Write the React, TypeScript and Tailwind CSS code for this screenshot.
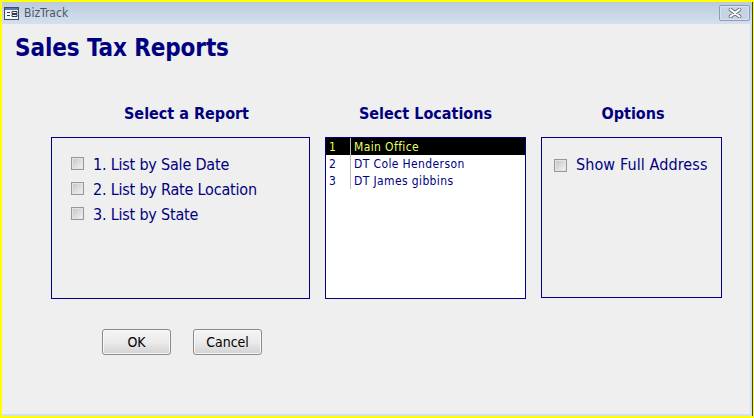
const font = { fontFamily: '"DejaVu Sans Condensed", "DejaVu Sans", sans-serif' };

function Check({ shift }: { shift: string }) {
  return (
    <span className={`box-border block h-[13px] w-[13px] shrink-0 border border-[#979797] bg-gradient-to-br from-[#c4c4c4] to-[#f4f4f4] shadow-[inset_0_0_0_1px_#e4e4e4] ${shift}`} />
  );
}

function CheckRow({ label, track, shift }: { label: string; track: string; shift: string }) {
  return (
    <div className="flex h-[25px] items-center gap-[9px]">
      <Check shift={shift} />
      <span className={`text-[16px] leading-[25px] text-[#000080] ${track}`}>{label}</span>
    </div>
  );
}

function Heading({ children, pad }: { children: string; pad: string }) {
  return (
    <h2 className={`mb-[13px] h-[20px] text-center text-[16px] leading-[20px] font-bold text-[#000080] ${pad}`}>{children}</h2>
  );
}

function Btn({ label }: { label: string }) {
  return (
    <button className="box-border h-[26px] w-[69px] rounded-[3px] border border-[#8a8a8a] bg-gradient-to-b from-[#f4f4f4] via-[#ebebeb] to-[#d2d2d2] text-[14px] text-black shadow-[inset_0_0_0_1px_#f8f8f8]">
      {label}
    </button>
  );
}

const rows = [
  ["1", "Main Office"],
  ["2", "DT Cole Henderson"],
  ["3", "DT James gibbins"],
];

export default function App() {
  return (
    <div style={font} className="box-border h-[418px] w-[754px] overflow-hidden border-t-2 border-r border-b-2 border-l-2 border-[#ffff00]">
      <div className="box-border flex h-full flex-col border-r border-[#3c3f48] bg-[#efefef]">
        <div className="flex h-[22px] shrink-0 items-center bg-gradient-to-b from-[#bccbdc] to-[#d3e0ef] pr-[2px] pl-[2px]">
          <svg width="15" height="13" viewBox="0 0 15 13" className="shrink-0">
            <rect x="0.5" y="0.5" width="14" height="12" fill="#f4f6fa" stroke="#3f4a66" />
            <rect x="1" y="1" width="13" height="2" fill="#5a78b8" />
            <path d="M3 5.5h3M3 8.5h3M8 4.5h5v2H8zM8 7.5h5v2H8z" stroke="#333a50" fill="none" strokeWidth="1" />
          </svg>
          <span className="ml-[5px] text-[12px] text-[#4a5568]">BizTrack</span>
          <div className="ml-auto flex h-[16px] w-[31px] items-center justify-center rounded-[2px] border border-[#8c9abb] bg-[#c5d3e4] shadow-[inset_0_0_0_1px_#d8e2ee]">
            <svg width="14" height="10" viewBox="0 0 14 10">
              <path d="M2.5 1.5 L11.5 8.5 M11.5 1.5 L2.5 8.5" stroke="#5b6472" strokeWidth="3.6" strokeLinecap="round" />
              <path d="M2.5 1.5 L11.5 8.5 M11.5 1.5 L2.5 8.5" stroke="#ffffff" strokeWidth="2.2" strokeLinecap="round" />
            </svg>
          </div>
        </div>

        <div className="flex-1 border-r-2 border-b-2 border-[#d4dfec] pt-[8px] pl-[13px]">
          <h1 className="h-[32px] text-[24px] leading-[32px] font-bold tracking-[-0.1px] text-[#000080]">Sales Tax Reports</h1>

          <div className="mt-[40px] ml-[36px] flex items-start gap-[15px]">
            <div className="w-[259px]">
              <Heading pad="pl-[12px]">Select a Report</Heading>
              <div className="box-border h-[162px] border border-[#000080] pt-[14px] pl-[19px]">
                <CheckRow label="1. List by Sale Date" track="tracking-[-0.2px]" shift="-translate-y-[1px]" />
                <CheckRow label="2. List by Rate Location" track="tracking-[-0.2px]" shift="-translate-y-[1px]" />
                <CheckRow label="3. List by State" track="tracking-[-0.2px]" shift="-translate-y-[1px]" />
              </div>
            </div>

            <div className="w-[201px]">
              <Heading pad="pl-0">Select Locations</Heading>
              <div className="box-border h-[162px] border border-[#000080] bg-white text-[12px] leading-[19px] text-[#000080]">
                {rows.map(([n, name], i) => (
                  <div key={n} className={`flex h-[17px] ${i === 0 ? "bg-black text-[#e8ff60]" : ""}`}>
                    <span className="box-border h-[17px] w-[25px] border-r border-[#c0c0c0] pl-[3px]">{n}</span>
                    <span className="h-[17px] pl-[3px] tracking-[0.38px]">{name}</span>
                  </div>
                ))}
              </div>
            </div>

            <div className="w-[181px]">
              <Heading pad="pl-[3px]">Options</Heading>
              <div className="box-border h-[161px] border border-[#000080] pt-[14px] pl-[12px]">
                <CheckRow label="Show Full Address" track="tracking-[0.1px]" shift="translate-y-[1px]" />
              </div>
            </div>
          </div>

          <div className="mt-[30px] ml-[87px] flex gap-[22px]">
            <Btn label="OK" />
            <Btn label="Cancel" />
          </div>
        </div>
      </div>
    </div>
  );
}
